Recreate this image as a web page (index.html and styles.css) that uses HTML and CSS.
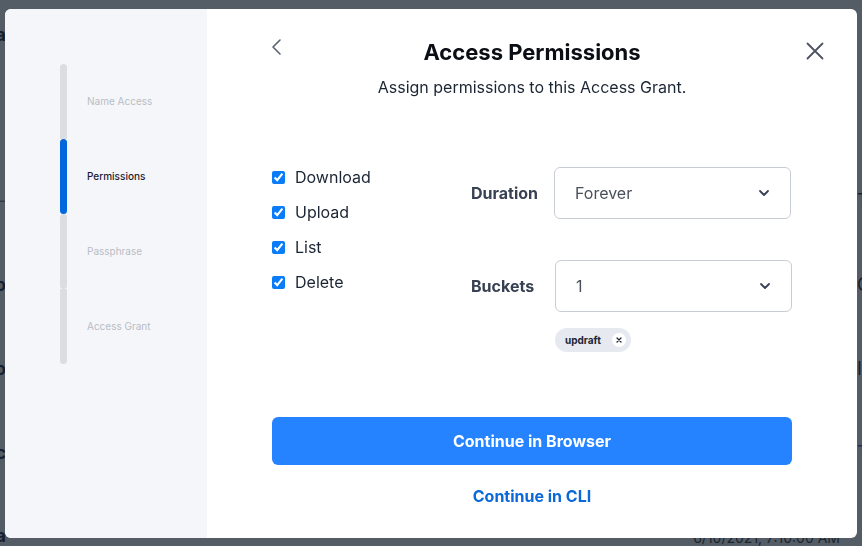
FILE: index.html
```html
<!DOCTYPE html>
<html lang="en">
<head>
    <meta charset="UTF-8">
    <meta name="viewport" content="width=device-width, initial-scale=1.0">
    <title>Access Permissions</title>
    <link rel="stylesheet" href="styles.css">
</head>
<body>
    <!-- Page behind the modal -->
    <div class="page">
        <div class="page-head"><span class="edge-left bold">Data</span></div>
        <div class="page-row"><span class="edge-left muted">-</span><span class="edge-right">T</span></div>
        <div class="page-row"><span class="edge-left bold">demo</span><span class="edge-right">C</span></div>
        <div class="page-row"><span class="edge-left bold">photo</span><span class="edge-right">I</span></div>
        <div class="page-row"><span class="edge-left bold">doc</span><span class="edge-right link">T</span></div>
        <div class="page-row last"><span class="edge-left bold">ira</span><span class="date">6/10/2021, 7:10:00 AM</span></div>
    </div>

    <!-- Modal -->
    <div class="overlay">
        <div class="modal">
            <aside class="steps">
                <div class="step first">
                    <div class="step-bar"></div>
                    <span class="step-label">Name Access</span>
                </div>
                <div class="step active">
                    <div class="step-bar"></div>
                    <span class="step-label">Permissions</span>
                </div>
                <div class="step">
                    <div class="step-bar"></div>
                    <span class="step-label">Passphrase</span>
                </div>
                <div class="step last">
                    <div class="step-bar"></div>
                    <span class="step-label">Access Grant</span>
                </div>
            </aside>

            <main class="content">
                <button class="back-btn" aria-label="Back">
                    <svg width="12" height="18" viewBox="0 0 12 18"><polyline points="9,2 2,9 9,16" fill="none" stroke="#5b6371" stroke-width="1.6" stroke-linecap="round" stroke-linejoin="round"/></svg>
                </button>
                <button class="close-btn" aria-label="Close">
                    <svg width="18" height="18" viewBox="0 0 18 18"><path d="M1.5 1.5 L16.5 16.5 M16.5 1.5 L1.5 16.5" stroke="#4b5361" stroke-width="1.8" stroke-linecap="round"/></svg>
                </button>

                <h1 class="title">Access Permissions</h1>
                <p class="subtitle">Assign permissions to this Access Grant.</p>

                <div class="form">
                    <div class="perms">
                        <label class="perm"><input type="checkbox" checked> Download</label>
                        <label class="perm"><input type="checkbox" checked> Upload</label>
                        <label class="perm"><input type="checkbox" checked> List</label>
                        <label class="perm"><input type="checkbox" checked> Delete</label>
                    </div>

                    <div class="fields">
                        <div class="field">
                            <span class="field-label">Duration</span>
                            <div class="select">
                                <span>Forever</span>
                                <svg width="12" height="8" viewBox="0 0 12 8"><polyline points="2,2 6,6 10,2" fill="none" stroke="#384152" stroke-width="1.8" stroke-linecap="round" stroke-linejoin="round"/></svg>
                            </div>
                        </div>
                        <div class="field buckets">
                            <span class="field-label">Buckets</span>
                            <div class="select">
                                <span>1</span>
                                <svg width="12" height="8" viewBox="0 0 12 8"><polyline points="2,2 6,6 10,2" fill="none" stroke="#384152" stroke-width="1.8" stroke-linecap="round" stroke-linejoin="round"/></svg>
                            </div>
                        </div>
                        <div class="tags">
                            <span class="tag">updraft
                                <span class="tag-x">
                                    <svg width="6" height="6" viewBox="0 0 6 6"><path d="M1 1 L5 5 M5 1 L1 5" stroke="#1b2533" stroke-width="1.2" stroke-linecap="round"/></svg>
                                </span>
                            </span>
                        </div>
                    </div>
                </div>

                <button class="primary-btn">Continue in Browser</button>
                <a class="cli-link" href="#">Continue in CLI</a>
            </main>
        </div>
    </div>
</body>
</html>
```

FILE: styles.css
```css
/* Reset */
* {
    margin: 0;
    padding: 0;
    box-sizing: border-box;
}

body {
    font-family: 'Inter', 'Noto Sans', Arial, sans-serif;
    background: #fff;
    color: #1b2533;
    width: 862px;
    height: 546px;
    overflow: hidden;
}

/* Page behind */
.page {
    height: 546px;
    padding-top: 24px;
    overflow: hidden;
}

.page-head {
    height: 134px;
    display: flex;
}

.page-row {
    height: 84px;
    display: flex;
    align-items: center;
    justify-content: space-between;
    font-size: 15px;
}

.page-row.last {
    height: 52px;
    align-items: flex-end;
}

.edge-left {
    width: 6px;
    display: flex;
    justify-content: flex-end;
    white-space: nowrap;
    font-size: 18px;
}

.bold {
    font-weight: 700;
    color: #0c1026;
}

.muted {
    color: #777;
}

.edge-right {
    width: 5px;
    overflow: hidden;
    white-space: nowrap;
    font-size: 18px;
    color: #0c1026;
}

.edge-right.link {
    color: #0a52c8;
}

.date {
    font-size: 14px;
    line-height: 16px;
    color: #222;
    margin-right: 22px;
}

/* Overlay + modal */
.overlay {
    position: fixed;
    inset: 0;
    background: rgba(27, 37, 51, 0.75);
    padding: 9px 5px 8px 5px;
}

.modal {
    height: 529px;
    background: #fff;
    border-radius: 6px;
    display: flex;
    overflow: hidden;
}

/* Steps sidebar */
.steps {
    width: 202px;
    background: #f5f6fa;
    padding: 55px 0 0 55px;
}

.step {
    display: flex;
    align-items: center;
    height: 75px;
}

.step-bar {
    width: 7px;
    height: 75px;
    background: #dcdde1;
    border-radius: 4px;
    margin-right: 20px;
}

.step.first .step-bar {
    border-radius: 4px 4px 1px 1px;
}

.step.last .step-bar {
    border-radius: 1px 1px 4px 4px;
}

.step.active .step-bar {
    background: #0068dc;
}

.step-label {
    font-size: 10px;
    line-height: 12px;
    margin-top: -1px;
    color: #b9bcc4;
}

.step.active .step-label {
    color: #1a1a2e;
    font-weight: 500;
}

/* Content */
.content {
    flex: 1;
    position: relative;
    padding: 30px 65px 0 65px;
    display: flex;
    flex-direction: column;
}

.back-btn,
.close-btn {
    position: absolute;
    background: none;
    border: none;
    cursor: pointer;
    display: flex;
}

.back-btn {
    top: 29px;
    left: 64px;
}

.close-btn {
    top: 33px;
    right: 33px;
}

.title {
    font-size: 22px;
    line-height: 26px;
    font-weight: 700;
    text-align: center;
    color: #0b0e14;
}

.subtitle {
    font-size: 16px;
    line-height: 20px;
    text-align: center;
    color: #1b2533;
    margin-top: 12px;
}

.form {
    display: flex;
    margin-top: 70px;
}

.perms {
    width: 199px;
    display: flex;
    flex-direction: column;
    gap: 15px;
}

.perm {
    display: flex;
    align-items: center;
    font-size: 16px;
    line-height: 20px;
    color: #1b2533;
    gap: 10px;
}

.perm input {
    width: 13px;
    height: 13px;
    margin: 0;
    accent-color: #0a7cf8;
}

.fields {
    flex: 1;
    display: flex;
    flex-direction: column;
}

.field {
    display: flex;
    align-items: center;
}

.field.buckets {
    margin-top: 41px;
}

.field-label {
    width: 83px;
    font-size: 16px;
    font-weight: 700;
    color: #384152;
}

.buckets .field-label {
    width: 84px;
}

.select {
    width: 237px;
    height: 52px;
    border: 1px solid #c8ccd3;
    border-radius: 6px;
    display: flex;
    align-items: center;
    justify-content: space-between;
    padding: 0 20px 0 20px;
    font-size: 16px;
    color: #4a505b;
}

.tags {
    margin-top: 16px;
    padding-left: 84px;
}

.tag {
    display: inline-flex;
    align-items: center;
    height: 24px;
    padding: 0 5px 0 10px;
    border-radius: 12px;
    background: #e6e9ef;
    font-size: 10px;
    font-weight: 700;
    color: #1b2533;
    gap: 11px;
}

.tag-x {
    width: 14px;
    height: 14px;
    border-radius: 50%;
    background: #fff;
    display: flex;
    align-items: center;
    justify-content: center;
}

.primary-btn {
    margin-top: 65px;
    height: 48px;
    border: none;
    border-radius: 6px;
    background: #2683ff;
    color: #fff;
    font-family: inherit;
    font-size: 16px;
    font-weight: 700;
    cursor: pointer;
}

.cli-link {
    margin-top: 21px;
    text-align: center;
    font-size: 16px;
    line-height: 20px;
    font-weight: 700;
    color: #0b68d8;
    text-decoration: none;
}
```
